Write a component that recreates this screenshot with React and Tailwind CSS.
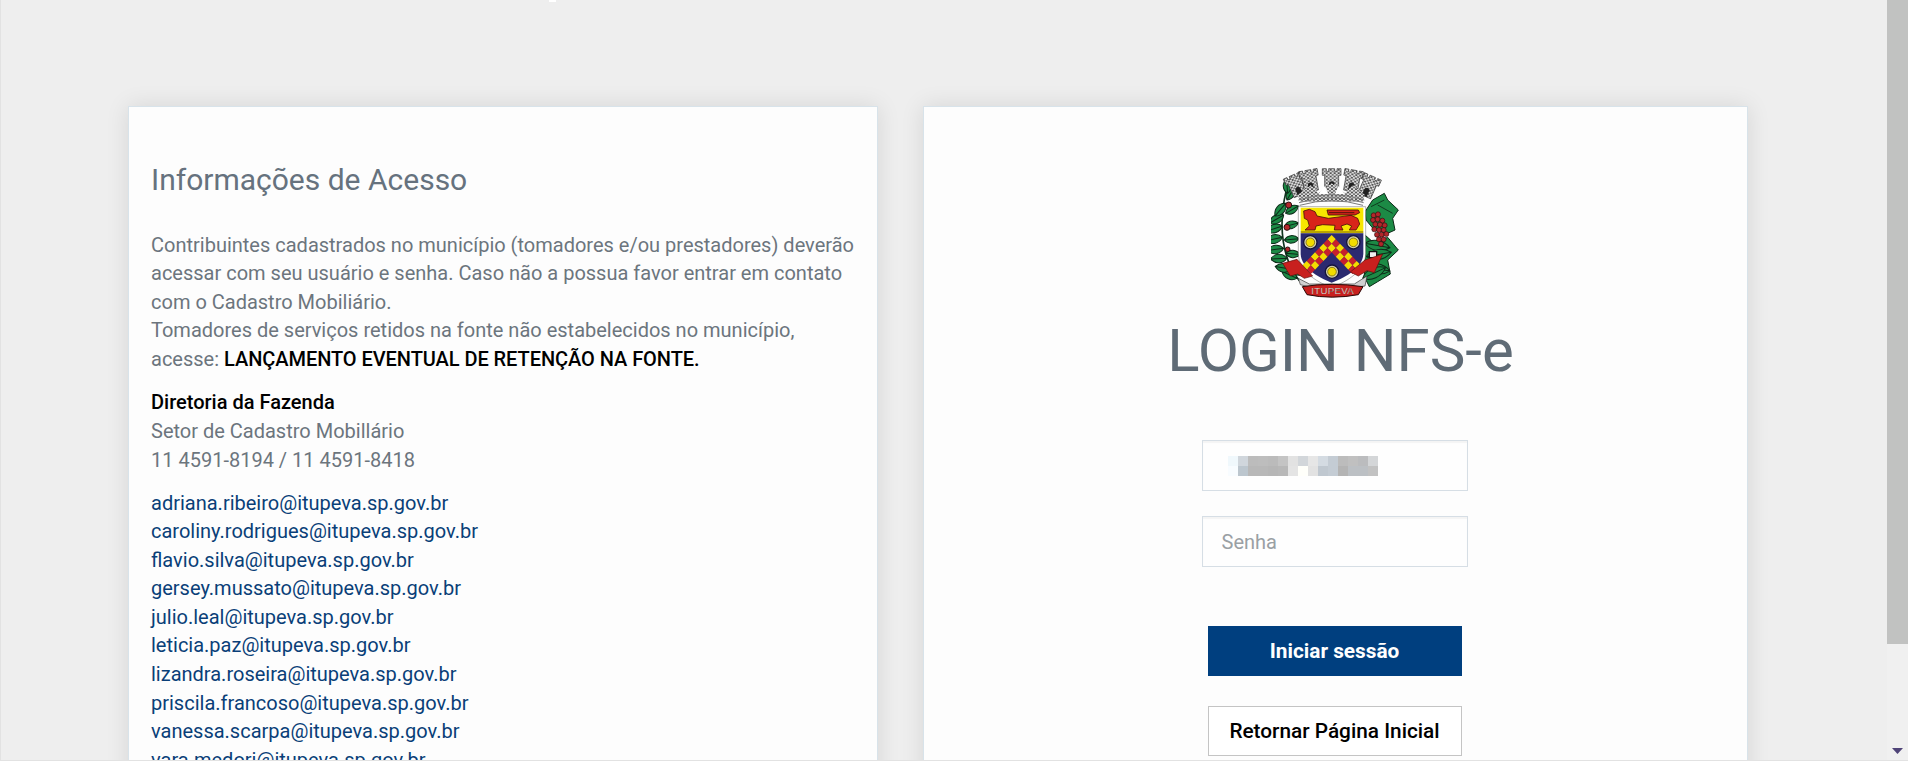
const emails = [
  'adriana.ribeiro@itupeva.sp.gov.br',
  'caroliny.rodrigues@itupeva.sp.gov.br',
  'flavio.silva@itupeva.sp.gov.br',
  'gersey.mussato@itupeva.sp.gov.br',
  'julio.leal@itupeva.sp.gov.br',
  'leticia.paz@itupeva.sp.gov.br',
  'lizandra.roseira@itupeva.sp.gov.br',
  'priscila.francoso@itupeva.sp.gov.br',
  'vanessa.scarpa@itupeva.sp.gov.br',
  'vara.medori@itupeva.sp.gov.br',
]

// pixelated (censored) user name
const blurRows = [
  ['#f0f8fc', '#d0d6dc', '#bcbcbc', '#bdbdbd', '#bbbbbb', '#c4c4c4', '#e2e2e2', '#d2d6da', '#e6e6e6', '#d4dbe2', '#c4ccd4', '#bcbcbc', '#c0c0c0', '#bbbcbe', '#d4d6d8'],
  ['#f8fcff', '#bcc6ce', '#b8b8b8', '#b8b8b8', '#b6b6b6', '#b8b8b8', '#e4e4e4', '#fffffa', '#e2e2e2', '#c0c8d0', '#c4ccd4', '#b4b4b4', '#bcc0c4', '#bcc0c4', '#c2c2c2'],
]

function Leaf({ x, y, a, l = 50, w = 17, fill = '#1c8a45' }) {
  return (
    <path
      transform={`translate(${x} ${y}) rotate(${a})`}
      d={`M0 0 C${l * 0.25} ${-w} ${l * 0.7} ${-w} ${l} 0 C${l * 0.7} ${w} ${l * 0.25} ${w} 0 0Z M0 0 L${l} 0`}
      fill={fill}
      stroke="#0d2a18"
      strokeWidth="3"
    />
  )
}

function Star({ x, y }) {
  return (
    <g>
      <circle cx={x} cy={y} r="20" fill="#d9d5a8" stroke="#14143c" strokeWidth="4" />
      <circle cx={x} cy={y} r="13" fill="#f2dc00" stroke="#5a4a10" strokeWidth="2" />
    </g>
  )
}

function Tower({ x, y, a = 0 }) {
  return (
    <g transform={`translate(${x} ${y}) rotate(${a})`}>
      <path d="M-28 -26h12v8h7v-8h18v8h7v-8h12v20h-7v44h-42v-44h-7z" fill="url(#stone)" stroke="#333" strokeWidth="2" />
      <path d="M-8 38v-18a8 8 0 0 1 16 0v18z" fill="#222" />
    </g>
  )
}

function Crest() {
  const chevron = []
  for (let i = 0; i <= 6; i++) {
    for (let j = 0; j <= 1; j++) {
      chevron.push([i, j])
      if (i > 1) chevron.push([j, i])
    }
  }
  return (
    <svg viewBox="90 51 390 399" className="w-[130px] h-[133px]">
      <defs>
        <pattern id="stone" width="12" height="10" patternUnits="userSpaceOnUse">
          <rect width="12" height="10" fill="#dcdcdc" />
          <rect width="6" height="5" fill="#777" />
          <rect x="6" y="5" width="6" height="5" fill="#555" />
        </pattern>
      </defs>

      {/* left branch */}
      <path d="M175 392 C125 330 110 230 135 125" fill="none" stroke="#10351f" strokeWidth="5" />
      {[[168, 385, 205], [152, 358, 190], [138, 325, 178], [128, 295, 172], [124, 262, 168], [124, 228, 162], [128, 195, 150], [134, 160, 130]].map(([x, y, a], i) => (
        <Leaf key={i} x={x} y={y} a={a} />
      ))}
      {[[148, 352, 30], [134, 310, 5], [130, 270, -5], [130, 230, -15], [134, 190, -30], [138, 150, -60], [140, 130, -95]].map(([x, y, a], i) => (
        <Leaf key={i} x={x} y={y} a={a} l={44} w={15} />
      ))}
      <circle cx="143" cy="165" r="9" fill="#b3262a" stroke="#2a1010" strokeWidth="3" />
      <circle cx="138" cy="232" r="9" fill="#b3262a" stroke="#2a1010" strokeWidth="3" />
      <circle cx="140" cy="298" r="7" fill="#b3262a" stroke="#2a1010" strokeWidth="3" />

      {/* right branch */}
      <path d="M372 255 L400 280 L440 262 L472 300 L440 330 L448 372 L410 395 L385 410 L370 380Z" fill="#1c8a45" stroke="#0d2a18" strokeWidth="3" />
      {[[372, 280, 10], [376, 320, -10], [372, 350, 10], [365, 385, -25]].map(([x, y, a], i) => (
        <Leaf key={i} x={x} y={y} a={a} l={76} w={20} />
      ))}
      <path d="M372 185 L395 150 L430 130 L440 150 L472 180 L455 205 L462 240 L440 250 L400 240 L375 210Z" fill="#1c8a45" stroke="#0d2a18" strokeWidth="3" />
      <path d="M390 170 L430 150 M410 165 L455 190" stroke="#0d2a18" strokeWidth="2.5" />
      <g fill="#b3262a" stroke="#2a1010" strokeWidth="2">
        {[[398, 196], [411, 193], [396, 210], [410, 208], [424, 212], [403, 223], [417, 224], [431, 226], [400, 238], [414, 240], [428, 240], [408, 254], [422, 254], [436, 252], [414, 268], [428, 268], [420, 282]].map(([x, y], i) => (
          <circle key={i} cx={x} cy={y} r="7.5" />
        ))}
      </g>
      <path d="M385 305h22v18h-22z" fill="#eee" stroke="#111" strokeWidth="4" />

      {/* crown */}
      <Tower x={163} y={100} a={-24} />
      <Tower x={385} y={103} a={24} />
      <Tower x={205} y={86} a={-10} />
      <Tower x={335} y={86} a={10} />
      <Tower x={272} y={82} />
      <path d="M170 135 L210 105 L232 130 L272 100 L312 130 L335 105 L372 135 L365 155 L178 155Z" fill="url(#stone)" />
      <path d="M232 132 L252 108 L262 132Z M282 132 L292 108 L312 132Z" fill="#fff" />
      <g fill="none" stroke="#7a7a7a" strokeWidth="3">
        <path d="M172 150 Q272 118 370 150" />
        <path d="M174 158 Q272 128 368 158" />
        <path d="M176 166 Q272 138 366 166" />
      </g>

      {/* shield */}
      <path d="M172 170 H374 V310 C374 360 320 395 272 412 C222 395 172 360 172 310Z" fill="#fff" stroke="#222" strokeWidth="1" />
      <path d="M179 173 H367 V243 H179Z" fill="#f7e600" />
      <path d="M179 243 H367 V250 H179Z" fill="#b9a500" />
      <path d="M179 250 H367 V310 C367 350 320 380 272 398 C226 380 179 350 179 310Z" fill="#2b2a70" />

      {/* lion */}
      <path
        d="M188 183 L205 178 L222 185 L228 198 L262 205 L300 200 L330 196 L350 205 L356 222 L345 240 L325 240 L332 228 L318 222 L300 228 L306 240 L280 240 L282 226 L245 224 L225 228 L222 240 L192 240 L205 228 L200 210 L190 205Z"
        fill="#d8241a"
        stroke="#4a1208"
        strokeWidth="2.5"
      />
      <path d="M258 180 H352 L356 188 L342 195 H262Z" fill="#d8241a" stroke="#3a1208" strokeWidth="2.5" />
      <path d="M264 188 H340" stroke="#3a1208" strokeWidth="2.5" />

      {/* chevron */}
      {chevron.map(([i, j], k) => {
        const cx = 272 + (j - i) * 12.5
        const cy = 268 + (i + j) * 13
        return (
          <polygon
            key={k}
            points={`${cx},${cy - 13} ${cx + 12.5},${cy} ${cx},${cy + 13} ${cx - 12.5},${cy}`}
            fill={(i + j) % 2 === 0 ? '#f5dc00' : '#c8202c'}
          />
        )
      })}
      <Star x={208} y={277} />
      <Star x={337} y={277} />
      <Star x={273} y={365} />

      {/* ribbons */}
      <path d="M125 340 L168 328 L215 378 L190 385 L170 372 L148 378Z" fill="#c8201e" stroke="#5a0f0a" strokeWidth="2" />
      <path d="M425 312 L400 368 L378 362 L352 378 L328 366 L372 330Z" fill="#c8201e" stroke="#5a0f0a" strokeWidth="2" />
      <path d="M172 385 L205 402 L340 402 L378 378 L372 408 L340 412 L210 412 L178 404Z" fill="#d0d0d0" stroke="#333" strokeWidth="2" />
      <path d="M184 410 Q272 396 366 410 L352 434 Q272 449 198 434Z" fill="#c8201e" stroke="#2a0806" strokeWidth="3" />
      <text x="275" y="431" textAnchor="middle" fontSize="29" fontFamily="Liberation Sans, sans-serif" fill="#f4f0e8" stroke="#3a0806" strokeWidth="0.6" letterSpacing="1">
        ITUPEVA
      </text>
    </svg>
  )
}

export default function App() {
  return (
    <div className="h-screen flex overflow-hidden bg-[#eeeeee] font-[Roboto,sans-serif]">
      <div className="relative flex-1 overflow-hidden border-l border-[#e2e2e2] border-b pt-[106px] pl-[127px]">
        <div className="absolute left-[548px] top-0 w-[7px] h-[2px] bg-white"></div>

        <div className="flex items-start gap-[45px]">
          {/* Informações */}
          <div className="w-[750px] h-[800px] shrink-0 bg-[#fdfdfd] border border-[#d8e3ea] shadow-[0_0_22px_rgba(0,0,0,0.1)] pl-[22px] pr-[20px] pt-[52px] text-[20px] leading-[28.6px] text-[#6c757d]">
            <h2 className="text-[30px] leading-[42px] text-[#66727e] mb-[29.7px]">Informações de Acesso</h2>
            <p className="mb-[14.7px]">
              Contribuintes cadastrados no município (tomadores e/ou prestadores) deverão acessar com seu usuário e senha. Caso não a possua favor entrar em contato com o Cadastro Mobiliário.
              <br />
              Tomadores de serviços retidos na fonte não estabelecidos no município, acesse: <span className="font-medium text-black tracking-[-0.06px]">LANÇAMENTO EVENTUAL DE RETENÇÃO NA FONTE.</span>
            </p>
            <p className="mb-[14.4px]">
              <span className="font-medium text-black">Diretoria da Fazenda</span>
              <br />
              Setor de Cadastro Mobillário
              <br />
              11 4591-8194 / 11 4591-8418
            </p>
            <div className="text-[#0a3f78]">
              {emails.map((email) => (
                <div key={email}>{email}</div>
              ))}
            </div>
          </div>

          {/* Login */}
          <div className="w-[825px] h-[800px] shrink-0 bg-[#fdfdfd] border border-[#d8e3ea] shadow-[0_0_22px_rgba(0,0,0,0.1)] pt-[60px] pr-[2px] flex flex-col items-center">
            <div className="ml-[2px]"><Crest /></div>
            <h1 className="text-[60px] leading-[72px] text-[#5f6b76] mt-[15px] mb-[53px] ml-[12px]">LOGIN NFS-e</h1>

            <div className="w-[266px] h-[51px] flex items-center pl-[25px] border border-[#d6dee5] bg-[#fefefe] shadow-[inset_0_2px_1px_rgba(0,0,0,0.04)]">
              <svg width="150" height="20" viewBox="0 0 150 20" shapeRendering="crispEdges">
                {blurRows.map((row, r) =>
                  row.map((color, c) => <rect key={`${r}-${c}`} x={c * 10} y={r * 10} width="10" height="10" fill={color} />)
                )}
              </svg>
            </div>
            <input
              placeholder="Senha"
              className="w-[266px] h-[51px] mt-[25px] px-[19px] text-[20px] border border-[#d6dee5] bg-[#fefefe] shadow-[inset_0_2px_1px_rgba(0,0,0,0.04)] placeholder:text-[#9aa0a4] outline-none"
            />

            <button className="w-[254px] h-[50px] mt-[59px] pt-[1px] bg-[#003f7f] text-white text-[20.8px] font-bold">Iniciar sessão</button>
            <button className="w-[254px] h-[50px] mt-[30px] pt-[1px] bg-white border border-[#c4c4c4] text-black text-[20.8px] font-medium">Retornar Página Inicial</button>
          </div>
        </div>
      </div>

      {/* scrollbar */}
      <div className="w-[21px] shrink-0 flex flex-col bg-[#f0f0f0] border-b border-[#e2e2e2]">
        <div className="h-[644px] bg-[#c1c2c1]"></div>
        <div className="flex-1 flex items-end justify-center pb-[6px]">
          <svg width="11" height="6" viewBox="0 0 11 6"><path d="M0 0h11L5.5 6z" fill="#4f4478" /></svg>
        </div>
      </div>
    </div>
  )
}
